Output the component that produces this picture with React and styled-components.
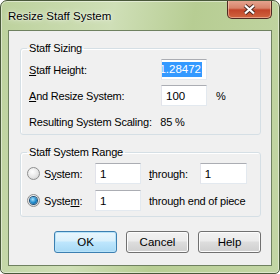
import React from 'react';
import styled, { createGlobalStyle } from 'styled-components';

const GlobalStyle = createGlobalStyle`
  html, body {
    margin: 0;
    padding: 0;
    background: #ffffff;
  }
  body {
    font-family: 'Liberation Sans', Arial, sans-serif;
  }
`;

const Window = styled.div`
  width: 280px;
  height: 274px;
  box-sizing: border-box;
  display: flex;
  flex-direction: column;
  border: 1px solid #49583a;
  border-radius: 7px 7px 5px 5px;
  background: linear-gradient(100deg, #bcd19c 0%, #cfdfb7 35%, #b7cd93 60%, #c3d6a5 100%);
  box-shadow: inset 0 0 0 1px rgba(255, 255, 255, 0.45);
  overflow: hidden;
`;

const TitleBar = styled.div`
  height: 29px;
  flex: none;
  display: flex;
  align-items: flex-start;
  justify-content: space-between;
  padding-left: 7px;
`;

const Title = styled.span`
  font-size: 11.5px;
  line-height: 12px;
  margin-top: 9px;
  color: #000;
  text-shadow: 0 0 6px rgba(255, 255, 255, 0.9), 0 0 2px rgba(255, 255, 255, 0.9);
`;

const CloseButton = styled.div`
  width: 43px;
  height: 18px;
  margin-right: 7px;
  margin-top: -1px;
  border: 1px solid #4e2a22;
  border-top: none;
  border-radius: 0 0 5px 5px;
  background: linear-gradient(#e6a793 0%, #d8836a 45%, #c2452a 55%, #d0653f 100%);
  box-shadow: inset 0 0 0 1px rgba(255, 220, 200, 0.5);
  display: flex;
  align-items: center;
  justify-content: center;
`;

const Client = styled.div`
  flex: 1;
  margin: 0 7px 7px;
  border: 1px solid #6f8160;
  background: #f0f0f0;
  padding: 11px 10px 0 11px;
  display: flex;
  flex-direction: column;
  font-size: 11px;
  letter-spacing: -0.2px;
  white-space: nowrap;
`;

const Group = styled.fieldset`
  margin: 0;
  padding: ${p => p.$pad};
  border: 1px solid #d5dfe5;
  border-radius: 3px;
  box-shadow: inset 1px 1px 0 #ffffff;
  display: flex;
  flex-direction: column;
  gap: ${p => p.$gap}px;
  height: ${p => p.$h}px;
  box-sizing: border-box;
  min-width: 0;
  & + & {
    margin-top: 11px;
  }
`;

const Legend = styled.legend`
  font-size: 11px;
  line-height: 13px;
  padding: 0 2px;
  margin-left: ${p => p.$ml}px;
  color: #000;
`;

const Row = styled.div`
  display: flex;
  align-items: center;
  height: 21px;
  color: #000;
`;

const Label = styled.span`
  width: ${p => p.$w}px;
  flex: none;
`;

const Field = styled.div`
  width: ${p => p.$w || 46}px;
  height: 21px;
  box-sizing: border-box;
  flex: none;
  margin-left: ${p => p.$ml || 0}px;
  border: 1px solid #e3e9ef;
  border-top-color: #abadb3;
  border-left-color: #e2e3ea;
  background: #fff;
  padding: 0 4px;
  display: flex;
  align-items: center;
  justify-content: ${p => (p.$clip ? 'flex-end' : 'flex-start')};
  overflow: hidden;
  font-size: 11.5px;
  letter-spacing: 0;
`;

const Selected = styled.span`
  background: #3399ff;
  color: #fff;
  line-height: 15px;
  padding-right: 1px;
`;

const After = styled.span`
  margin-left: ${p => p.$ml}px;
`;

const Radio = styled.span`
  width: 13px;
  height: 13px;
  box-sizing: border-box;
  flex: none;
  border-radius: 50%;
  border: 1px solid #8e8f8f;
  background: radial-gradient(circle at 40% 35%, #ffffff 0%, #e6e6e6 55%, #c8c8c8 100%);
  margin-right: 4px;
  display: flex;
  align-items: center;
  justify-content: center;
  &::after {
    content: '';
    display: ${p => (p.$checked ? 'block' : 'none')};
    width: 7px;
    height: 7px;
    border-radius: 50%;
    background: radial-gradient(circle at 40% 35%, #a6e3ff 0%, #1b87c9 55%, #0a4f84 100%);
    box-shadow: 0 0 0 1px #1d4f77;
  }
`;

const U = styled.span`
  text-decoration: underline;
`;

const Buttons = styled.div`
  display: flex;
  gap: 9px;
  margin-top: 14px;
  padding-left: 34px;
`;

const Button = styled.div`
  width: 63px;
  height: 22px;
  box-sizing: border-box;
  border: 1px solid ${p => (p.$default ? '#3c7fb1' : '#707070')};
  border-radius: 3px;
  background: ${p =>
    p.$default
      ? 'linear-gradient(#eaf6fd 0%, #d9f0fc 45%, #bee6fd 50%, #a7d9f5 100%)'
      : 'linear-gradient(#f2f2f2 0%, #ebebeb 45%, #dddddd 50%, #cfcfcf 100%)'};
  box-shadow: inset 0 0 0 1px ${p => (p.$default ? '#b7e3f9' : '#fcfcfc')};
  font-size: 11.5px;
  letter-spacing: 0;
  display: flex;
  align-items: center;
  justify-content: center;
  color: #000;
`;

export default function App() {
  return (
    <>
      <GlobalStyle />
      <Window>
        <TitleBar>
          <Title>Resize Staff System</Title>
          <CloseButton>
            <svg width="13" height="11" viewBox="0 0 13 11">
              <path
                d="M2 1.5 L6.5 5.5 L11 1.5 M2 9.5 L6.5 5.5 L11 9.5"
                stroke="#4a2a22"
                strokeWidth="4"
                fill="none"
              />
              <path
                d="M2 1.5 L6.5 5.5 L11 1.5 M2 9.5 L6.5 5.5 L11 9.5"
                stroke="#ffffff"
                strokeWidth="2.2"
                fill="none"
              />
            </svg>
          </CloseButton>
        </TitleBar>
        <Client>
          <Group $pad="4px 8px 0" $gap={5} $h={93}>
            <Legend $ml={-2}>Staff Sizing</Legend>
            <Row>
              <Label $w={132}><U>S</U>taff Height:</Label>
              <Field $clip>
                <Selected>1.28472</Selected>
              </Field>
            </Row>
            <Row>
              <Label $w={132}><U>A</U>nd Resize System:</Label>
              <Field>100</Field>
              <After $ml={9}>%</After>
            </Row>
            <Row>
              <span>Resulting System Scaling:&nbsp;&nbsp; 85 %</span>
            </Row>
          </Group>
          <Group $pad="4px 8px 0 6px" $gap={6} $h={71}>
            <Legend $ml={0}>Staff System Range</Legend>
            <Row>
              <Radio />
              <Label $w={51}>S<U>y</U>stem:</Label>
              <Field>1</Field>
              <After $ml={8}><U>t</U>hrough:</After>
              <Field $ml={12} $w={47}>1</Field>
            </Row>
            <Row>
              <Radio $checked />
              <Label $w={51}>Syste<U>m</U>:</Label>
              <Field>1</Field>
              <After $ml={8}>through end of piece</After>
            </Row>
          </Group>
          <Buttons>
            <Button $default>OK</Button>
            <Button>Cancel</Button>
            <Button>Help</Button>
          </Buttons>
        </Client>
      </Window>
    </>
  );
}
